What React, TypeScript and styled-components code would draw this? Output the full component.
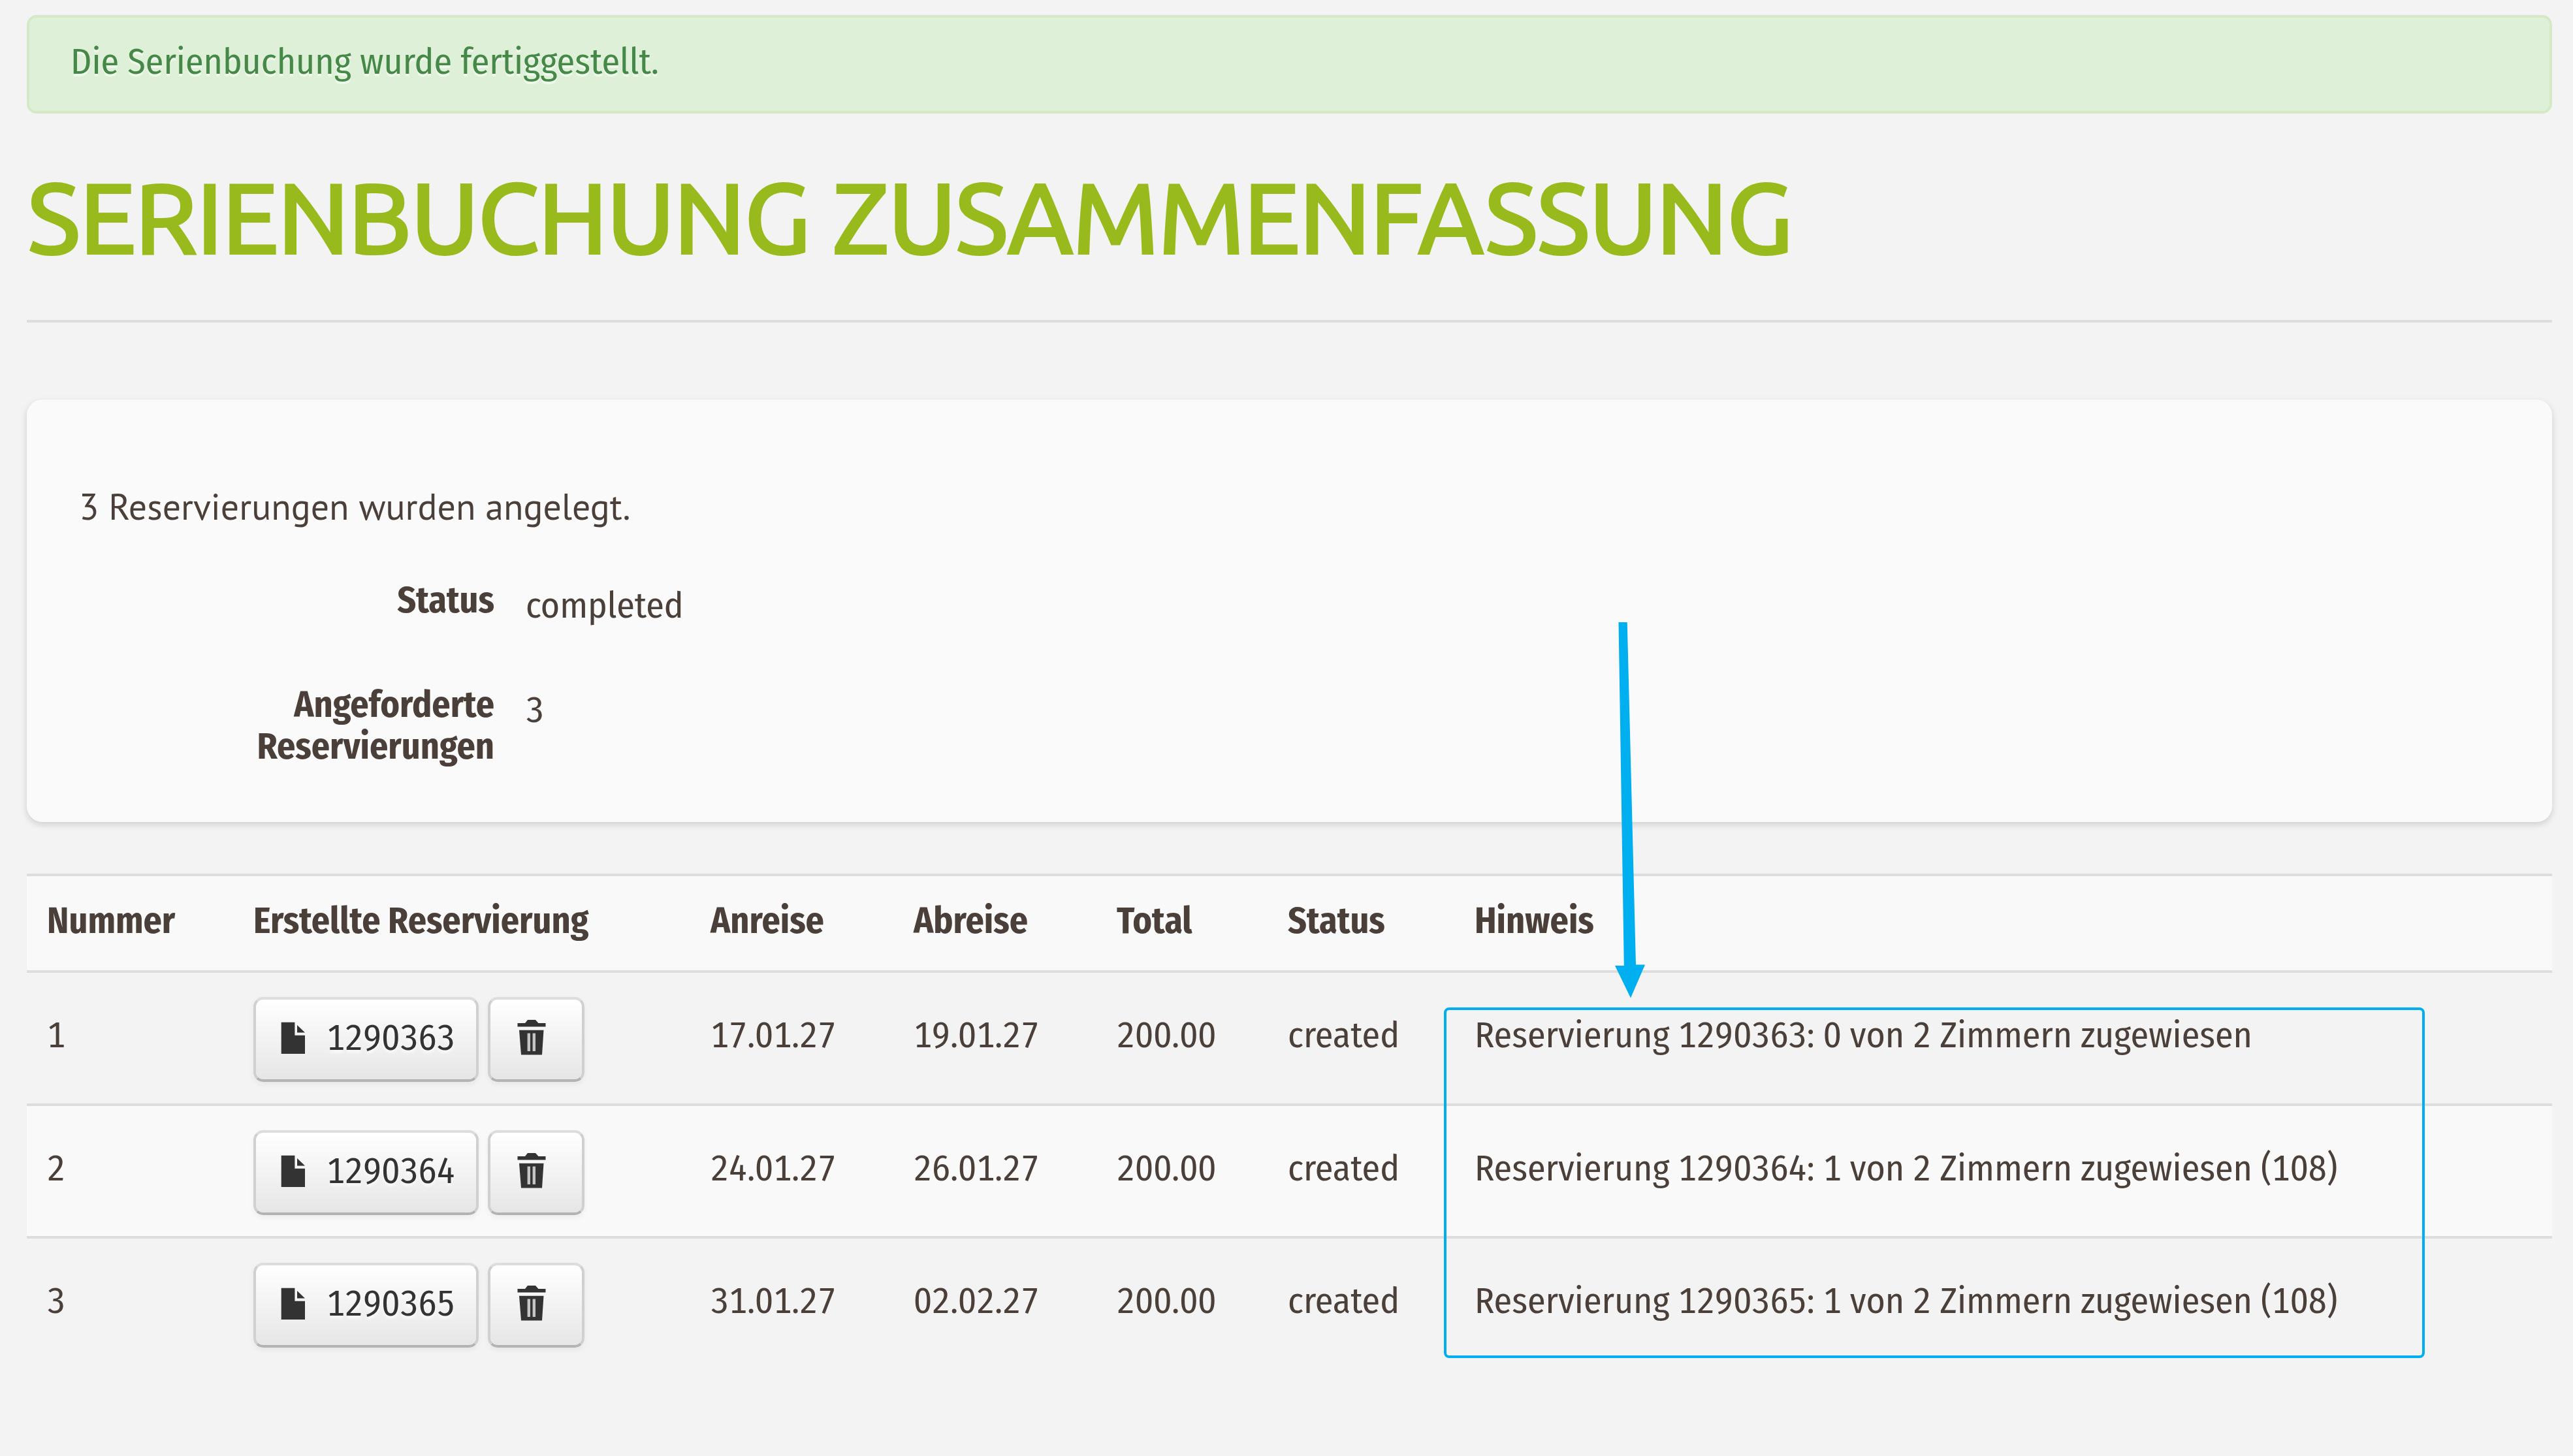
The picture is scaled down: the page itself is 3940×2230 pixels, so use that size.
import styled, { createGlobalStyle } from "styled-components";

interface Reservation {
  number: number;
  code: string;
  arrival: string;
  departure: string;
  total: string;
  status: string;
  note: string;
}

const reservations: Reservation[] = [
  {
    number: 1,
    code: "1290363",
    arrival: "17.01.27",
    departure: "19.01.27",
    total: "200.00",
    status: "created",
    note: "Reservierung 1290363: 0 von 2 Zimmern zugewiesen",
  },
  {
    number: 2,
    code: "1290364",
    arrival: "24.01.27",
    departure: "26.01.27",
    total: "200.00",
    status: "created",
    note: "Reservierung 1290364: 1 von 2 Zimmern zugewiesen (108)",
  },
  {
    number: 3,
    code: "1290365",
    arrival: "31.01.27",
    departure: "02.02.27",
    total: "200.00",
    status: "created",
    note: "Reservierung 1290365: 1 von 2 Zimmern zugewiesen (108)",
  },
];

const headers = ["Nummer", "Erstellte Reservierung", "Anreise", "Abreise", "Total", "Status", "Hinweis"];

const FileIcon = () => (
  <Icon viewBox="0 0 40 57">
    <path d="M2.7 5.7H23.4V25.7H39V54H2.7Z" />
    <path d="M27 10L39 21.5H27Z" />
  </Icon>
);

const TrashIcon = () => (
  <Icon viewBox="-1 0 52 57">
    <path d="M4.5 7H16L20 2H32L36.5 7H47.5V12.4H4.5Z" />
    <path
      fillRule="evenodd"
      d="M7 17.8H44.5L42 55.4H10ZM19.8 22.7V49.7H23.8V22.7ZM27.8 22.7V49.7H31.8V22.7Z"
    />
    <path d="M19.8 22.7H23.8V49.7H19.8ZM27.8 22.7H31.8V49.7H27.8Z" fill="#c4c4c4" />
  </Icon>
);

const App = () => {
  return (
    <Page>
      <GlobalStyle />
      <Alert>Die Serienbuchung wurde fertiggestellt.</Alert>
      <Title>Serienbuchung Zusammenfassung</Title>
      <Card>
        <Intro>3 Reservierungen wurden angelegt.</Intro>
        <Details>
          <Term>Status</Term>
          <Value>completed</Value>
          <Term>Angeforderte Reservierungen</Term>
          <Value>3</Value>
        </Details>
      </Card>
      <Table>
        <HeaderRow>
          {headers.map((header) => (
            <HeaderCell key={header}>{header}</HeaderCell>
          ))}
        </HeaderRow>
        {reservations.map((item) => (
          <Row key={item.code} $striped={item.number % 2 === 0}>
            <Cell>{item.number}</Cell>
            <Actions>
              <Button $width={345}>
                <FileIcon />
                <span>{item.code}</span>
              </Button>
              <Button $width={148}>
                <TrashIcon />
              </Button>
            </Actions>
            <Cell>{item.arrival}</Cell>
            <Cell>{item.departure}</Cell>
            <Cell>{item.total}</Cell>
            <Cell>{item.status}</Cell>
            <Cell>{item.note}</Cell>
          </Row>
        ))}
        <Highlight />
        <Arrow viewBox="0 0 50 580">
          <path d="M7.5 3H20.7L34 527.5H48L26 578.5L2 529H15.8Z" />
        </Arrow>
      </Table>
    </Page>
  );
};

export default App;

const GlobalStyle = createGlobalStyle`
  * {
    box-sizing: border-box;
  }

  body {
    margin: 0;
    background: #f3f3f3;
  }
`;

const Page = styled.main`
  min-height: 2230px;
  padding: 23px 32px 0 41px;
  overflow: hidden;
  color: #4a3f39;
  font-family: "Fira Sans Condensed", "Roboto Condensed", "Open Sans", sans-serif;
  font-size: 55.8px;
  font-variant-numeric: tabular-nums;
  line-height: 64px;
`;

const Alert = styled.div`
  height: 151px;
  padding: 36px 63px;
  border: 4px solid #d6e9c6;
  border-radius: 15px;
  background: #dff0d8;
  color: #468847;
  text-shadow: 0 4px 0 rgba(255, 255, 255, 0.5);
`;

const Title = styled.h1`
  margin: 81px 0 118px;
  padding-bottom: 81px;
  border-bottom: 4px solid #ddd;
  color: #99ba1c;
  font-family: Ubuntu, "Open Sans", sans-serif;
  font-size: 153px;
  font-weight: 500;
  line-height: 154px;
  letter-spacing: -3.2px;
  word-spacing: 2px;
  text-transform: uppercase;
  -webkit-text-stroke: 2px #99ba1c;
`;

const Card = styled.section`
  height: 647px;
  padding: 131px 80px 0;
  border-radius: 24px;
  background: #fafafa;
  box-shadow: 0 4px 11px rgba(0, 0, 0, 0.15);
`;

const Intro = styled.p`
  margin: 0 0 81px;
  font-family: "PT Sans", "Open Sans", sans-serif;
`;

const Details = styled.dl`
  display: grid;
  grid-template-columns: 636px 1fr;
  grid-auto-rows: minmax(112px, auto);
  gap: 48px;
  margin: 0;
`;

const Term = styled.dt`
  font-weight: 700;
  text-align: right;
`;

const Value = styled.dd`
  margin: 0;
  padding-top: 8px;
`;

const Table = styled.div`
  position: relative;
  margin-top: 79px;
`;

const HeaderRow = styled.div`
  display: grid;
  grid-template-columns: 316px 700px 311px 311px 262px 286px 1fr;
  height: 148px;
  padding: 37px 0 0 31px;
  border-top: 4px solid #ddd;
  background: #f9f9f9;
`;

const HeaderCell = styled.div`
  font-weight: 700;
`;

const Row = styled(HeaderRow)<{ $striped: boolean }>`
  height: 203.5px;
  background: ${({ $striped }) => ($striped ? "#f9f9f9" : "transparent")};
`;

const Cell = styled.div`
  padding-top: 27px;
`;

const Actions = styled.div`
  display: flex;
  align-items: flex-start;
  gap: 14px;
`;

const Button = styled.button<{ $width: number }>`
  display: flex;
  align-items: flex-start;
  gap: 32px;
  width: ${({ $width }) => $width}px;
  height: 130px;
  padding: 27px 36px;
  border: 4px solid;
  border-color: #ddd #d0d0d0 #b3b3b3;
  border-radius: 15px;
  background: linear-gradient(#fff, #e6e6e6) padding-box;
  box-shadow: 0 4px 8px rgba(0, 0, 0, 0.05);
  color: #333;
  font: inherit;
  font-variant-numeric: tabular-nums;
  text-shadow: 0 4px 4px rgba(255, 255, 255, 0.75);
`;

const Icon = styled.svg`
  flex: none;
  height: 57px;
  margin-top: 2px;
  fill: #333;
`;

const Highlight = styled.div`
  position: absolute;
  top: 205px;
  left: 2170px;
  width: 1502px;
  height: 537px;
  border: 4px solid #00afef;
  border-radius: 8px;
`;

const Arrow = styled.svg`
  position: absolute;
  top: -388px;
  left: 2430px;
  width: 50px;
  height: 580px;
  fill: #00afef;
`;
